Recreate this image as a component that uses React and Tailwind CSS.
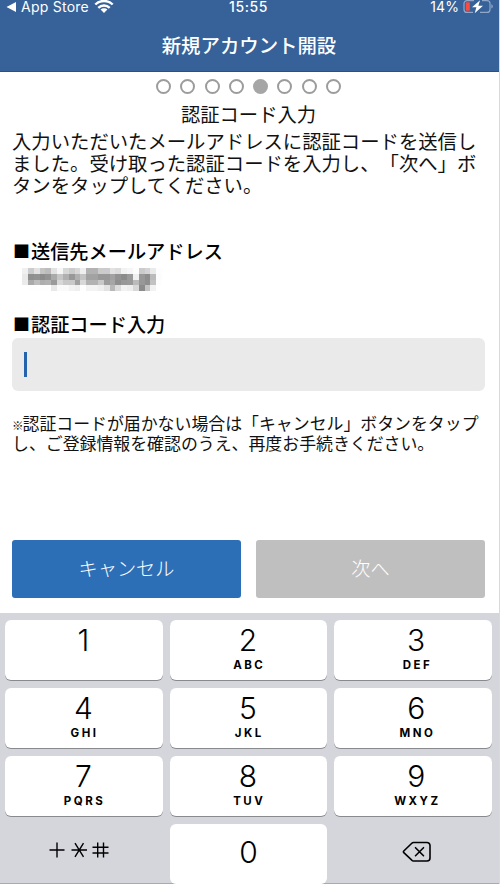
const keys = [
  { digit: '1', letters: '' },
  { digit: '2', letters: 'ABC' },
  { digit: '3', letters: 'DEF' },
  { digit: '4', letters: 'GHI' },
  { digit: '5', letters: 'JKL' },
  { digit: '6', letters: 'MNO' },
  { digit: '7', letters: 'PQRS' },
  { digit: '8', letters: 'TUV' },
  { digit: '9', letters: 'WXYZ' },
]

// grey levels of the pixelated mail address, one row per line of blocks
const mosaic = [
  ['f0', 'cc', 'e2', 'c4', 'bc', 'e2', 'f6', 'd8', 'cc', 'd8', 'ef', 'b2', 'b2', 'cb', 'cb', 'e2', 'dc', 'f2', 'f6', 'fd', 'cb', 'd4', 'ea', 'fd'],
  ['e9', '8f', '92', '8b', '92', 'aa', 'c6', 'b0', '98', 'b0', 'c4', 'a2', 'a2', '98', '98', 'a2', '93', '8b', '9a', 'f0', '98', '8d', 'bb', 'fc'],
  ['eb', 'aa', 'bd', 'ae', 'b2', '9a', 'd8', 'c8', 'c8', 'a0', 'd8', 'b2', 'b2', 'c8', '9c', 'a6', '8f', '98', '9a', 'bb', '98', '8f', 'c2', 'fd'],
  ['ff', 'fe', 'fe', 'fe', 'fe', 'e8', 'fa', 'fa', 'f2', 'ee', 'fe', 'f3', 'f3', 'ee', 'e2', 'b8', 'dc', 'f2', 'ee', 'd8', '8c', 'c4', 'f2', 'ff'],
]

function StatusBar() {
  return (
    <div className="grid h-4 grid-cols-3 items-start font-['Inter',sans-serif] text-[14px] leading-[14px] text-white">
      <div className="flex items-start pl-[6px]">
        <svg width="11" height="14" viewBox="0 0 11 14" fill="currentColor">
          <path d="M.5 7 10 2v10z" />
        </svg>
        <span className="ml-[4px] tracking-[0.25px]">App Store</span>
        <svg className="ml-[5px]" width="20" height="14" viewBox="0 0 20 14" fill="none" stroke="currentColor" strokeWidth="2.4">
          <path d="M1.3 4.500C6-.2 14-.2 18.700 4.500M4.300 7.800c3.200-3 8.200-3 11.400 0" />
          <path d="m10 13 3.400-3.400a4.800 4.800 0 0 0-6.800 0z" fill="currentColor" stroke="none" />
        </svg>
      </div>
      <div className="pr-[2px] text-center font-medium tracking-[0.600px]">15:55</div>
      <div className="flex items-start justify-end pr-[5px]">
        <span className="tracking-[0.1px]">14%</span>
        <svg className="ml-[4px]" width="31" height="14" viewBox="0 0 31 14" fill="none">
          <path d="M11 .6H4A3 3 0 0 0 1 3.600v5.800a3 3 0 0 0 3 3h6M19 .6h5a3 3 0 0 1 3 3v5.800a3 3 0 0 1-3 3h-7" stroke="#8fa7c8" strokeWidth="1.2" />
          <path d="M28.300 4.300v4.200q1.500-.6 1.500-2.100t-1.500-2.100z" fill="#8fa7c8" />
          <rect x="2.800" y="2.200" width="4" height="8.600" rx="1" fill="#fb4a3f" />
          <path d="M17 .2 9 7.200h4.400l-1.700 6L20 5.800h-4.600z" fill="white" />
        </svg>
      </div>
    </div>
  )
}

function StepDots() {
  return (
    <div className="flex h-[28px] items-center justify-center gap-[9.300px]">
      {[0, 1, 2, 3, 4, 5, 6, 7].map((step) => (
        <span
          key={step}
          className={
            step === 4
              ? 'size-[15px] rounded-full bg-[#a6a6a6]'
              : 'size-[15px] rounded-full border-[2.500px] border-[#9c9c9c]'
          }
        />
      ))}
    </div>
  )
}

function Label({ children }) {
  return (
    <h3 className="flex h-[26px] items-center text-[19.200px] leading-[26px] font-medium text-black">
      <span className="w-[19px] text-center text-[17px]">■</span>
      {children}
    </h3>
  )
}

function MaskedAddress() {
  return (
    <svg className="mt-[4px] ml-[10px] block" width="140" height="23" viewBox="0 0 24 4" preserveAspectRatio="none" shapeRendering="crispEdges">
      {mosaic.map((row, y) =>
        row.map((level, x) => (
          <rect key={`${x}-${y}`} x={x} y={y} width="1" height="1" fill={`#${level}${level}${level}`} />
        ))
      )}
    </svg>
  )
}

function Key({ digit, letters, right }) {
  return (
    <button
      className={`flex h-[60px] flex-col items-center rounded-[6px] bg-white pt-[5px] font-['Inter',sans-serif] text-black shadow-[0_1px_0_#898a8e] ${right ? 'pl-[6px]' : 'pr-[1px]'}`}
    >
      <span className="text-[30px] leading-[31px] font-light">{digit}</span>
      <span className="mt-[2px] pl-[2.500px] text-[11.500px] leading-[14px] font-bold tracking-[2.500px]">{letters}</span>
    </button>
  )
}

function Keypad() {
  return (
    <div className="h-[271px] border-b border-[#a9aaae] bg-[#d5d6dc] pt-[7px] pr-[7px] pl-[5px]">
      <div className="grid grid-cols-3 gap-x-[7px] gap-y-[8px]">
        {keys.map((key, i) => (
          <Key key={key.digit} {...key} right={i % 3 === 2} />
        ))}
        <div className="flex h-[60px] items-center justify-center pr-[9px] pb-[8px]">
          <svg width="60" height="18" viewBox="0 0 60 18" fill="none" stroke="black" strokeWidth="1.4">
            <path d="M.5 9H15.500M8 1.500v15" />
            <path d="M22.500 9H38M26 2.200l8.500 13.600M34.500 2.200L26 15.800" />
            <path d="M43.500 6.300H59.500M43.500 12H59.500M48.700 1.500v15M54.500 1.500v15" />
          </svg>
        </div>
        <button className="h-[60px] rounded-[6px] bg-white pb-[4px] font-['Inter',sans-serif] text-[30px] leading-[30px] font-light text-black">
          0
        </button>
        <div className="flex h-[60px] items-center justify-center pb-[4px] pl-[7px]">
          <svg width="30" height="22" viewBox="0 0 30 22" fill="none" stroke="black" strokeWidth="1.6" strokeLinejoin="round" strokeLinecap="round">
            <path d="M11.500 1.500H25a3 3 0 0 1 3 3v12.500a3 3 0 0 1-3 3H11.500Q10.500 20 9.800 19.200L1.800 11.700Q1 10.800 1.800 10L9.800 2.200Q10.500 1.500 11.500 1.500z" />
            <path d="m13.500 6.700 8 8M21.500 6.700l-8 8" />
          </svg>
        </div>
      </div>
    </div>
  )
}

export default function App() {
  return (
    <div className="flex h-[884px] w-[500px] flex-col overflow-hidden border-r border-[#d9d9dc] bg-white font-['Noto_Sans_CJK_JP',sans-serif] text-[#111] [text-spacing-trim:space-all]">
      <header className="h-[72px] border-b border-[#2a528a] bg-[#366199]">
        <StatusBar />
        <h1 className="pt-[14px] pr-[1px] text-center text-[19.400px] leading-[30px] font-medium text-white">新規アカウント開設</h1>
      </header>

      <main className="h-[541px] pr-[14px] pl-[12px]">
        <StepDots />
        <h2 className="mt-[2px] text-center text-[19.300px] leading-[24px]">認証コード入力</h2>
        <p className="mt-[4px] text-[19.350px] leading-[22.200px] whitespace-nowrap">
          入力いただいたメールアドレスに認証コードを送信し
          <br />
          ました。受け取った認証コードを入力し、「次へ」ボ
          <br />
          タンをタップしてください。
        </p>

        <div className="mt-[41px]">
          <Label>送信先メールアドレス</Label>
        </div>
        <MaskedAddress />

        <div className="mt-[20px]">
          <Label>認証コード入力</Label>
        </div>
        <div className="mt-[1px] flex h-[53px] items-center rounded-[6px] bg-[#eaeaea] pl-[12px]">
          <span className="h-[25px] w-[2.500px] bg-[#2563ad]" />
        </div>

        <p className="mt-[22px] h-[40px] text-[16.900px] leading-[20px] whitespace-nowrap">
          <span className="mr-[-1px] text-[11.500px] leading-[10px] font-medium">※</span>認証コードが届かない場合は「キャンセル」ボタンをタップ
          <br />
          し、ご登録情報を確認のうえ、再度お手続きください。
        </p>

        <div className="mt-[87px] grid grid-cols-2 gap-[15px] text-[19.200px] font-light text-white">
          <button className="h-[58px] rounded-[3px] bg-[#2d6fb7]">キャンセル</button>
          <button className="h-[58px] rounded-[3px] bg-[#bfbfbf]">次へ</button>
        </div>
      </main>

      <Keypad />
    </div>
  )
}
